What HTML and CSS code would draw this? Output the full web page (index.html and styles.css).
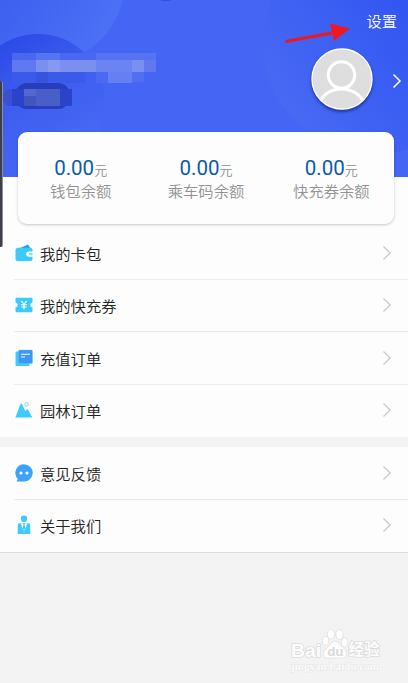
FILE: index.html
```html
<!DOCTYPE html>
<html lang="zh-CN">
<head>
<meta charset="utf-8">
<title>我的</title>
<link rel="stylesheet" href="styles.css">
</head>
<body>
<div class="page">
  <header class="hero">
    <svg class="hero-art" width="408" height="177" viewBox="0 0 408 177">
      <defs>
        <linearGradient id="g1" x1="0" y1="0" x2="1" y2=".55"><stop offset=".3" stop-color="#3b5eef"/><stop offset="1" stop-color="#4b6ff5"/></linearGradient>
        <linearGradient id="g2" x1=".2" y1="0" x2=".8" y2="1"><stop offset="0" stop-color="#2a47e4"/><stop offset=".4" stop-color="#3b5cef"/><stop offset="1" stop-color="#4a6cf5"/></linearGradient>
        <linearGradient id="g3" x1="0" y1=".8" x2=".85" y2=".2"><stop offset="0" stop-color="#4a6bf3"/><stop offset=".45" stop-color="#3c5ff3"/><stop offset="1" stop-color="#2b4df0"/></linearGradient>
      </defs>
      <circle cx="48" cy="-15" r="76" fill="url(#g1)"/>
      <circle cx="38" cy="101" r="67" fill="url(#g2)"/>
      <circle cx="0" cy="205" r="55" fill="#4264f0" opacity=".7"/>
      <circle cx="375" cy="42" r="112" fill="url(#g3)"/>
      <ellipse cx="166" cy="-2" rx="9" ry="3" fill="#3450d0"/>
      <g shape-rendering="crispEdges">
        <path fill="#4a68ef" d="M12 53h24v7H12zM60 53h36v7H60z"/>
        <path fill="#5674f2" d="M36 53h24v7H36zM96 53h60v7H96z"/>
        <path fill="#6079f0" d="M12 60h24v12H12zM144 60h12v12h-12z"/>
        <path fill="#7a90f0" d="M36 60h12v12H36zM60 60h36v12H60zM132 60h12v12h-12z"/>
        <path fill="#8798f0" d="M48 60h12v12H48z"/>
        <path fill="#6b84f1" d="M96 60h36v12H96z"/>
        <path fill="#3c5aea" d="M12 72h24v11H12zM48 72h37v11H48z"/>
        <path fill="#3655dc" d="M36 72h12v11H36z"/>
        <path fill="#4b69f2" d="M96 72h12v11H96z"/>
        <path fill="#6680f3" d="M108 72h24v11h-24z"/>
        <path fill="#526ff2" d="M132 72h12v10h-12z"/>
      </g>
      <rect x="15" y="83" width="55" height="26" rx="12" fill="#263ebd"/>
      <rect x="3" y="89" width="22" height="17" rx="7" fill="#3950d2"/>
      <g shape-rendering="crispEdges">
        <path fill="#2a43ca" d="M12 89h12v17H12zM60 89h12v17H60z"/>
        <path fill="#5468cb" d="M24 89h12v7H24z"/>
        <path fill="#4a5ec8" d="M36 89h24v17H36z"/>
        <path fill="#4055bf" d="M24 96h12v10H24z"/>
      </g>
      <path d="M285.500 41.500 332 33" stroke="#ed1820" stroke-width="3"/>
      <path d="M330 23.500 350 28.500 334 41z" fill="#ed1820"/>
    </svg>
    <a class="settings">设置</a>
    <div class="profile">
      <div class="avatar">
        <svg width="62" height="62" viewBox="0 0 62 62">
          <defs><clipPath id="av"><circle cx="31" cy="31" r="30"/></clipPath></defs>
          <circle cx="31" cy="31" r="30" fill="#dedede" stroke="#fff" stroke-width="1.300"/>
          <g clip-path="url(#av)" fill="none" stroke="#fff" stroke-width="3"><circle cx="30.500" cy="27" r="13.200"/><path d="M8 56C14 36 47 36 53 56"/></g>
        </svg>
      </div>
      <svg class="go" width="10" height="16" viewBox="0 0 10 16"><path d="M1.500 1.500 8 8 1.500 14.500" fill="none" stroke="#fff" stroke-width="1.500"/></svg>
    </div>
  </header>
  <section class="card">
    <div class="balance"><p class="amount">0.00<span>元</span></p><p class="label">钱包余额</p></div>
    <div class="balance"><p class="amount">0.00<span>元</span></p><p class="label">乘车码余额</p></div>
    <div class="balance"><p class="amount">0.00<span>元</span></p><p class="label">快充券余额</p></div>
  </section>
  <nav class="menu first">
    <a class="row">
      <svg class="icon" viewBox="0 0 18 18"><path d="M5 4 13 .5 16 5z" fill="#3597f4"/><path d="M3 3.700H15.500Q17.500 4 17.500 6V8H13.500a2.200 2.200 0 0 0 0 4.400H17.500V15q0 2-2 2H2.500q-2 0-2-2V6q0-2 2.500-2.300z" fill="#3ecbfb"/><path d="M17.700 7.600h-4a2.400 2.400 0 0 0 0 4.800h4z" fill="#fff"/><path d="M17.500 8.900h-2.500a1.200 1.200 0 0 0 0 2.400h2.500z" fill="#7adcfc"/></svg>
      <span>我的卡包</span><svg class="chev" viewBox="0 0 10 16"><path d="M1.500 1.500 8.200 8 1.500 14.500"/></svg></a>
    <a class="row">
      <svg class="icon" viewBox="0 0 18 18"><path d="M1.500 1.700h15q1 0 1 1v4.100a2.200 2.200 0 0 0 0 4.400v4q0 1-1 1h-15q-1 0-1-1v-4a2.200 2.200 0 0 0 0-4.400V2.700q0-1 1-1z" fill="#3ecbfb"/><path d="M6.300 5 9 8.200 11.700 5M9 8v5.200M6.300 8.600h5.400M6.300 11h5.400" fill="none" stroke="#fff" stroke-width="1.100"/></svg>
      <span>我的快充券</span><svg class="chev" viewBox="0 0 10 16"><path d="M1.500 1.500 8.200 8 1.500 14.500"/></svg></a>
    <a class="row">
      <svg class="icon" viewBox="0 0 18 18"><rect x=".5" y="2.500" width="14" height="14.500" rx="1" fill="#3ecbfb"/><rect x="3.500" y="1" width="14" height="13.500" rx="1" fill="#3a98fa" stroke="#62c4fc" stroke-width=".4"/><path d="M6 5.200h9M6 8h4" stroke="#fff" stroke-width="1.100"/></svg>
      <span>充值订单</span><svg class="chev" viewBox="0 0 10 16"><path d="M1.500 1.500 8.200 8 1.500 14.500"/></svg></a>
    <a class="row">
      <svg class="icon" viewBox="0 0 18 18"><path d="M.4 16.500 5.300 3.600Q6.200 2 7.300 3.600L10.200 10 11.500 8.600q.8-.7 1.500.2l4.400 7.700z" fill="#3ecbfb"/><circle cx="11.600" cy="3.400" r="1.700" fill="none" stroke="#70c6ed" stroke-width=".8"/></svg>
      <span>园林订单</span><svg class="chev" viewBox="0 0 10 16"><path d="M1.500 1.500 8.200 8 1.500 14.500"/></svg></a>
  </nav>
  <nav class="menu second">
    <a class="row">
      <svg class="icon" viewBox="0 0 18 18"><path d="M9 .2a8.700 8.700 0 1 1 0 17.400H1.500l1.300-2.700A8.700 8.700 0 0 1 9 .2z" fill="#3da2fc"/><circle cx="6" cy="9" r="1.600" fill="#fff"/><circle cx="12" cy="9" r="1.600" fill="#fff"/></svg>
      <span>意见反馈</span><svg class="chev" viewBox="0 0 10 16"><path d="M1.500 1.500 8.200 8 1.500 14.500"/></svg></a>
    <a class="row">
      <svg class="icon" viewBox="0 0 18 18"><circle cx="9" cy="2.700" r="3.200" fill="#3ecbfb"/><path d="M5.500 7 9 15.500 12.500 7Q15.300 7.200 15.300 10v8H2.700v-8Q2.700 7.200 5.500 7z" fill="#3ecbfb"/><path d="M8 7h2l-.4 1.800L10.200 12 9 15 7.800 12l.6-3.200z" fill="#3ecbfb"/></svg>
      <span>关于我们</span><svg class="chev" viewBox="0 0 10 16"><path d="M1.500 1.500 8.200 8 1.500 14.500"/></svg></a>
  </nav>
  <div class="edge"></div>
  <svg class="watermark" width="100" height="52" viewBox="0 0 100 52">
    <g class="wm-text"><text x="5" y="32.500" font-size="19" textLength="30" lengthAdjust="spacingAndGlyphs">Bai</text><text class="cjk" x="62.500" y="31" font-size="15.500" textLength="31">经验</text></g>
    <g fill="#fff" stroke="#dedede" stroke-width=".8"><ellipse cx="39.500" cy="17" rx="3.200" ry="4.500"/><ellipse cx="45" cy="10" rx="3.700" ry="5"/><ellipse cx="53.500" cy="10.500" rx="3.700" ry="5"/><ellipse cx="58.500" cy="18.500" rx="3.200" ry="4.500"/><path d="M48.500 17q4 0 6 4l5 5q4 8-4 8H42q-7 0-4-7l6-6q2-4 4.500-4z"/></g>
    <text x="41.500" y="31.500" class="du" font-size="13">du</text>
    <text x="5" y="46" class="url" font-size="10" textLength="88" lengthAdjust="spacingAndGlyphs">jingyan.baidu.com</text>
  </svg>
</div>
</body>
</html>
```
FILE: styles.css
```css
* { box-sizing: border-box; }
body { margin: 0; background: #f3f3f3; font-family: Roboto, "Noto Sans CJK SC", sans-serif; color: #222; }
p { margin: 0; }
.page { position: relative; width: 408px; height: 683px; overflow: hidden; }
.hero { position: relative; height: 177px; background: #4566f5; color: #fff; display: flex; flex-direction: column; align-items: flex-end; }
.hero-art { position: absolute; inset: 0; }
.settings { position: relative; margin: 11px 11px 0 0; font-size: 15.3px; line-height: 22px; font-weight: 350; }
.profile { position: relative; display: flex; align-items: center; gap: 19px; margin: 15px 6px 0 0; }
.avatar { width: 62px; height: 62px; border-radius: 50%; box-shadow: 0 2px 3px rgba(15, 30, 110, .65); }
.avatar svg, .go { display: block; }
.go { margin-top: 3px; }
.card { position: relative; display: grid; grid-template-columns: repeat(3, 1fr); width: 376px; height: 92px; margin: -45px 0 0 18px; padding-top: 24px; border-radius: 9px; background: #fdfdfd; box-shadow: 0 1px 3px rgba(0, 0, 0, .22); text-align: center; }
.amount { height: 25px; font-size: 20.5px; line-height: 25px; color: #0b5ca8; white-space: nowrap; }
.amount span { font-size: 13px; color: #8e8e8e; font-weight: 350; }
.label { font-size: 15.3px; line-height: 23px; color: #929292; font-weight: 350; }
.menu { background: #fdfdfd; }
.first { margin-top: -47px; padding-top: 50px; height: 260px; }
.second { margin-top: 10px; height: 105px; }
.row { display: flex; align-items: center; height: 52.600px; margin-left: 14px; padding: 0 15px 0 1px; font-size: 15.300px; font-weight: 350; border-bottom: 1px solid #ebebeb; }
.row:last-child { border-bottom: 0; height: 51px; }
.row span { flex: 1; }
.icon { width: 18px; height: 18px; margin-right: 7px; overflow: visible; }
.chev { width: 10px; height: 16px; fill: none; stroke: #c8c8c8; stroke-width: 1.200; }
.row .chev { margin-right: 1px; }
.edge { height: 1px; background: #dcdcdc; }
.page::before { content: ""; position: absolute; z-index: 3; left: 0; top: 81px; width: 2px; height: 166px; background: #3f3f48; border-right: 1px solid #8d8d98; border-radius: 0 2px 2px 0; }
.watermark { position: absolute; left: 286px; top: 624px; }
.wm-text text { font-family: "Liberation Sans", sans-serif; font-weight: 700; fill: #fdfdfd; stroke: #dcdcdc; stroke-width: 1.600; paint-order: stroke; }
.wm-text .cjk { font-family: "Noto Sans CJK SC", sans-serif; }
.du { font-family: "Liberation Sans", sans-serif; font-weight: 700; fill: #d8d8d8; }
.url { font-family: "Liberation Serif", serif; font-weight: 700; fill: #fbfbfb; stroke: #e6e6e6; stroke-width: 1; paint-order: stroke; }
```
